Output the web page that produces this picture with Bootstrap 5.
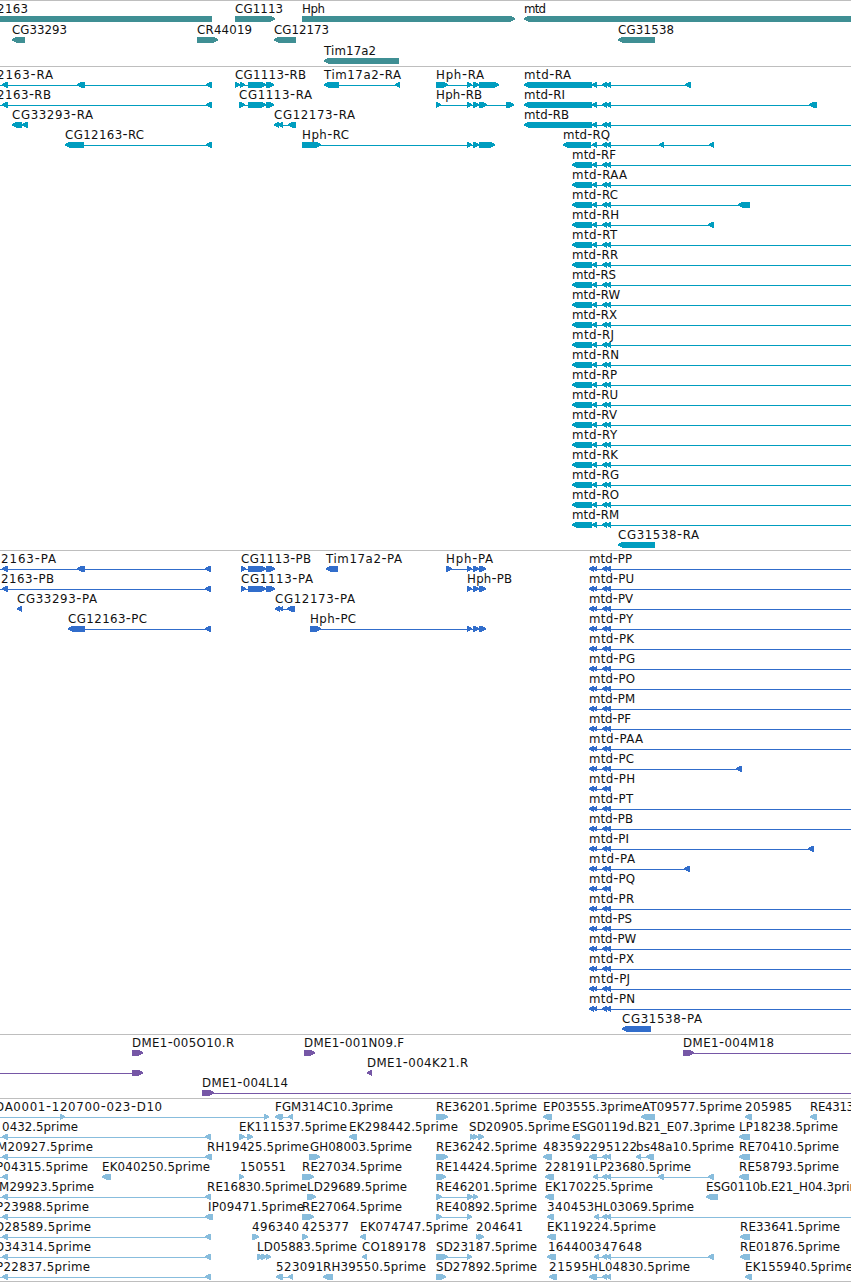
<!DOCTYPE html>
<html lang="en">
<head>
<meta charset="utf-8">
<meta name="viewport" content="width=device-width, initial-scale=1">
<title>Genome browser tracks</title>
<link href="https://cdn.jsdelivr.net/npm/bootstrap@5.3.0/dist/css/bootstrap.min.css" rel="stylesheet">
<style>
  body { font-family: "DejaVu Sans", sans-serif; }
  .browser { width: 851px; }
  .track { border-top: 1px solid #bebebe; padding-bottom: 3px; }
  .lane { height: 20px; width: 851px; overflow: visible; }
  .lane text { fill: #111; font-size: 11.8px; }
  .lane .dash { font-size: 14px; }
  .lane path { shape-rendering: crispEdges; }
  .genes { color: #3f8f94; padding-bottom: 2px; }
  .genes .lane { height: 21px; }
  .transcripts { color: #009dbf; }
  .proteins { color: #316dcb; }
  .bacs { color: #7657a6; }
  .ests { color: #88bddd; padding-bottom: 2px; border-bottom: 1px solid #bebebe; }
</style>
</head>
<body class="bg-white overflow-hidden">
<main class="browser d-flex flex-column overflow-hidden">
  <section class="track genes d-flex flex-column" id="genes"></section>
  <section class="track transcripts d-flex flex-column" id="transcripts"></section>
  <section class="track proteins d-flex flex-column" id="proteins"></section>
  <section class="track bacs d-flex flex-column" id="bacs"></section>
  <section class="track ests d-flex flex-column" id="ests"></section>
</main>
<script src="https://cdn.jsdelivr.net/npm/bootstrap@5.3.0/dist/js/bootstrap.bundle.min.js"></script>
<script>
// Feature: label | label start | label end | strand | exons | optional intron line extent
const tail = '602,607 606,611';
const left = '2,8 205,211';
const tracks = {
  genes: [
    ['2163|-3|28|L|-20,212', 'CG1113|235|283|R|235,275', 'Hph|302|325|R|302,515', 'mtd|524|546|L|524,870'],
    ['CG33293|12|67|L|12,25', 'CR44019|197|252|R|197,218', 'CG12173|274|329|L|274,296', 'CG31538|618|674|L|618,655'],
    ['Tim17a2|324|376|L|324,399']
  ],
  transcripts: [
    ['2163-RA|-3|53|L|2,8 77,85 206,212|0,212', 'CG1113-RB|235|306|R|235,240 240,245 248,266 266,274', 'Tim17a2-RA|324|401|L|324,339 395,400', 'Hph-RA|436|484|R|436,448 467,472 473,479 479,499', `mtd-RA|524|571|L|524,592 592,597 ${tail} 685,691`],
    ['2163-RB|-3|51|L|2,8 206,212|0,212', 'CG1113-RA|239|312|R|239,245 248,266 266,274', 'Hph-RB|436|482|R|436,441 467,472 473,479 479,487 506,514', `mtd-RI|524|565|L|524,592 592,597 ${tail} 809,817`],
    ['CG33293-RA|12|93|L|12,22 22,28', 'CG12173-RA|274|355|L|274,279 278,283 288,296', `mtd-RB|524|569|L|524,592 592,597 ${tail}|592,851`],
    ['CG12163-RC|65|144|L|65,84 206,212', 'Hph-RC|302|349|R|302,321 467,472 473,479 479,495', `mtd-RQ|563|610|L|563,591 592,597 ${tail} 659,664 709,714`],
    ...[['RF',616],['RAA',627],['RC',618,'738,750'],['RH',619,'708,714'],['RT',617],['RR',618],['RS',616],['RW',620],['RX',617],['RJ',614],['RN',619],['RP',617],['RU',618],['RV',617],['RY',617],['RK',618],['RG',619],['RO',619],['RM',619]]
      .map(([n, e, b]) => [`mtd-${n}|572|${e}|L|572,592 592,597 ${tail}${b ? ' ' + b : '|592,851'}`]),
    ['CG31538-RA|618|699|L|618,655']
  ],
  proteins: [
    ['2163-PA|1|56|L|2,8 77,85 205,211|0,211', 'CG1113-PB|241|311|R|241,246 248,266 266,275', 'Tim17a2-PA|326|402|L|326,338', 'Hph-PA|446|493|R|446,452 467,472 473,479 479,486'],
    [`2163-PB|1|54|L|${left}|0,211`, 'CG1113-PA|241|313|R|241,246 248,266 266,275', 'Hph-PB|467|512|R|467,472 473,479 479,486'],
    ['CG33293-PA|17|97|L|17,22', 'CG12173-PA|275|355|L|275,280 279,283 287,295'],
    ['CG12163-PC|68|147|L|68,85 205,211', 'Hph-PC|310|356|R|310,321 467,472 473,479 479,486'],
    ...Array.from({ length: 19 }, () => []),
    ['CG31538-PA|622|702|L|622,651']
  ],
  bacs: [
    ['DME1-005O10.R|132|234|R|132,143', 'DME1-001N09.F|304|404|R|304,315', 'DME1-004M18|683|774|R|683,694|683,851'],
    ['|0|0|R|132,143|0,143', 'DME1-004K21.R|367|468|L|367,372'],
    ['DME1-004L14|202|288|R|202,214|202,851']
  ],
  ests: [
    ['DA0001-120700-023-D10|-5|162|R|60,65 264,269|0,269', 'FGM314C10.3prime|275|393|L|275,282 279,283 288,293', 'RE36201.5prime|436|537|R|436,448', 'EP03555.3prime|543|642|L|543,552', 'AT09577.5prime|642|742|L|641,655', '205985|745|792|L|745,752', 'RE4313|810|854|L|810,817'],
    [`0432.5prime|2|78|L|${left}|0,211`, 'EK111537.5prime|239|347|R|239,245 247,253', 'EK298442.5prime|349|458|L|349,357', 'SD20905.5prime|469|570|R|470,475 473,478 478,484', 'ESG0119d.B21_E07.3prime|572|735|L|572,580', 'LP18238.5prime|739|838|L|739,750'],
    ['M20927.5prime|-3|93|L|2,8 205,212|0,212', 'RH19425.5prime|207|309|L|', 'GH08003.5prime|310|412|R|309,320', 'RE36242.5prime|436|537|R|436,448', '483592|543|590|L|543,552', '295122|590|637|L|589,597 ' + tail, 'bs48a10.5prime|636|734|L|636,641 646,654', 'RE70410.5prime|739|839|L|739,750'],
    ['P04315.5prime|-4|88|L|2,8|0,8', 'EK040250.5prime|102|210|L|102,111', '150551|240|286|R|239,244', 'RE27034.5prime|302|402|R|302,314', 'RE14424.5prime|436|537|R|436,446', '228191|545|592|L|545,554', `LP23680.5prime|593|691|L|593,598 ${tail} 658,664 708,714`, 'RE58793.5prime|739|839|L|739,749'],
    [`M29923.5prime|-1|94|L|${left}|0,211`, 'RE16830.5prime|207|307|L|', 'LD29689.5prime|307|407|R|307,316', 'RE46201.5prime|436|537|R|436,442 467,473 473,478', 'EK170225.5prime|545|653|L|545,554', 'ESG0110b.E21_H04.3prime|706|868|L|706,718'],
    ['P23988.5prime|-4|89|L|2,8 205,213|0,213', 'IP09471.5prime|208|304|L|', 'RE27064.5prime|302|402|R|302,314', 'RE40892.5prime|436|537|R|436,442 467,472', '340453|547|594|L|547,554', `HL03069.5prime|594|694|L|594,599 ${tail}|594,851`],
    [`D28589.5prime|-5|91|L|${left}|0,211`, '496340|252|299|R|252,259', '425377|302|349|R|302,308', 'EK074747.5prime|360|468|L|360,366', '204641|476|523|R|476,480 478,484', 'EK119224.5prime|547|656|L|547,556', 'RE33641.5prime|740|840|L|740,750'],
    [`D34314.5prime|-5|91|L|${left}|0,211`, 'LD05883.5prime|257|357|R|257,263 261,267 266,271', 'CO189178|362|426|L|362,367', 'SD23187.5prime|436|537|R|436,448 467,472', '164400|548|594|L|547,556', `347648|594|642|L|594,599 ${tail} 708,714`, 'RE01876.5prime|740|840|L|740,750'],
    [`P22837.5prime|-4|90|L|${left}|0,211`, '523091|276|323|L|276,283 288,293', 'RH39550.5prime|323|426|L|323,333', 'SD27892.5prime|436|537|R|436,446', '21595|549|589|L|549,557', 'HL04830.5prime|589|690|L|589,597 ' + tail, 'EK155940.5prime|745|853|L|745,752']
  ]
};

[['PP',632],['PU',634],['PV',633],['PY',633],['PK',634],['PG',635],['PO',635],['PM',635],['PF',631],['PAA',643],['PC',634,'736,742'],['PH',635,''],['PT',633],['PB',633],['PI',629,'808,814'],['PA',635,'684,690'],['PQ',635,''],['PR',634],['PS',632],['PW',636],['PX',634],['PJ',630],['PN',635]]
  .forEach(([n, e, b], i) => tracks.proteins[i].push(`mtd-${n}|589|${e}|L|589,594 593,597 ${tail}${b === undefined ? '|589,851' : b && ' ' + b}`));

// Exon block, 6px tall, whose end tapers along the strand
function exon(a, b, strand) {
  return strand === 'L'
    ? `M${a} 17h1v-1h2v-1H${b}v6H${a + 4}v-1h-2v-1H${a}z`
    : `M${b} 17h-1v-1h-2v-1H${a}v6H${b - 4}v-1h2v-1H${b}z`;
}

function feature(spec) {
  const [label, x0, x1, strand, blocks, extent] = spec.split('|');
  const exons = blocks ? blocks.trim().split(' ').map(s => s.split(',').map(Number)) : [];
  let out = '';
  if (exons.length > 1 || extent) {
    const [a, b] = extent ? extent.split(',').map(Number) : [exons[0][0] + 2, exons[exons.length - 1][1] - 2];
    out += `<path fill="currentColor" d="M${a} 18H${b}v1H${a}z"/>`;
  }
  if (exons.length) out += `<path fill="currentColor" d="${exons.map(([a, b]) => exon(a, b, strand)).join('')}"/>`;
  if (label) {
    const text = label.replace(/-/g, '<tspan class="dash">-</tspan>');
    out += `<text x="${+x0 + 0.1}" y="12" textLength="${x1 - x0}">${text}</text>`;
  }
  return out;
}

for (const [id, lanes] of Object.entries(tracks)) {
  document.getElementById(id).innerHTML = lanes
    .map(lane => `<svg class="lane d-block flex-shrink-0">${lane.map(feature).join('')}</svg>`).join('');
}
</script>
</body>
</html>
